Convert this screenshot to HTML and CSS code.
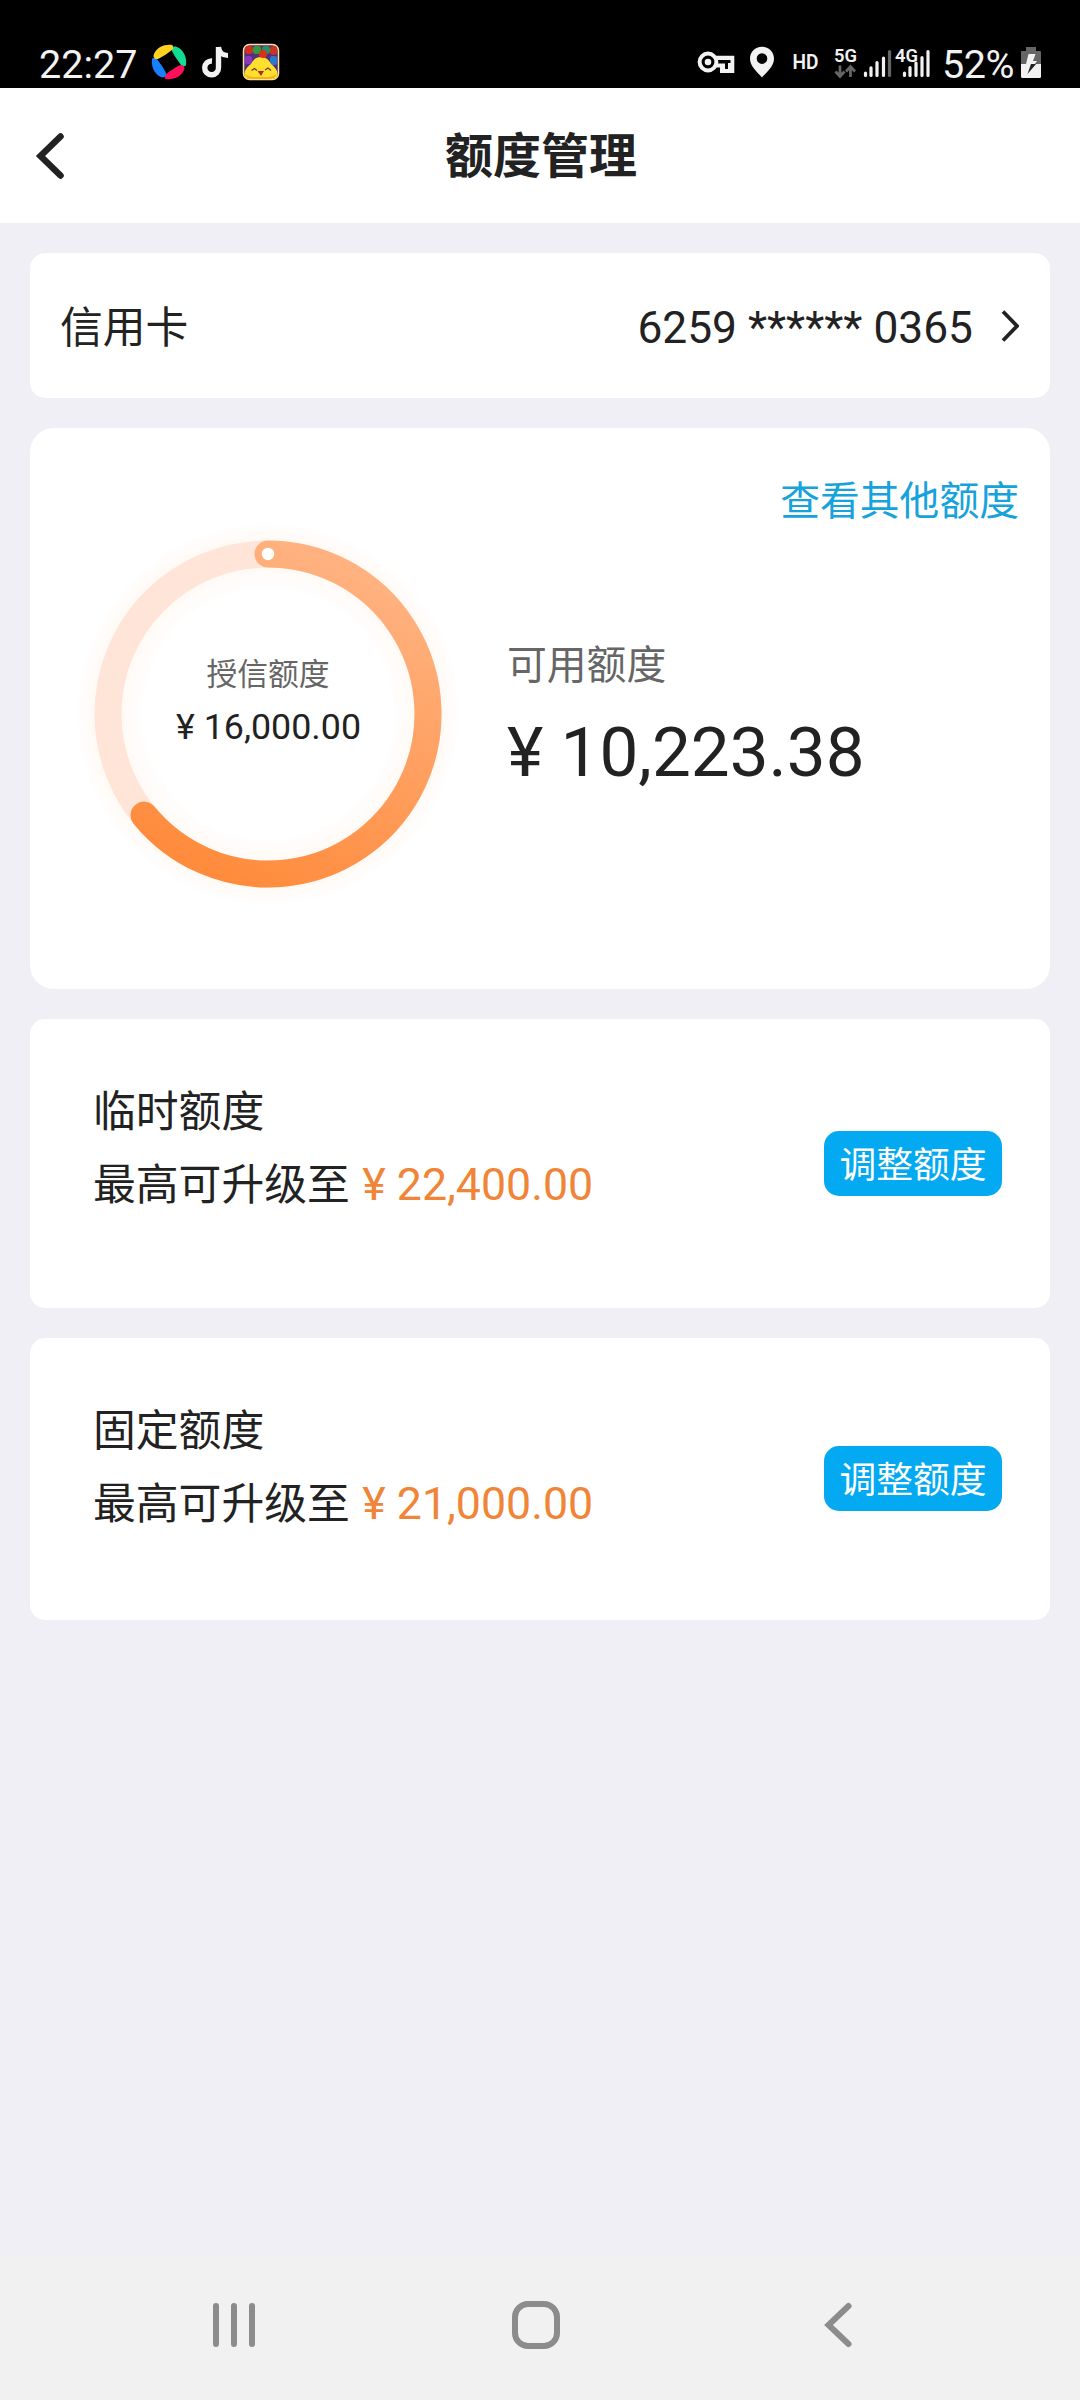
FILE: index.html
```html
<!DOCTYPE html>
<html lang="zh-CN">
<head>
<meta charset="utf-8">
<title>额度管理</title>
<link rel="stylesheet" href="styles.css">
</head>
<body>
<div class="status-bar">
  <span class="clock">22:27</span>
  <svg class="status-apps" width="132" height="48" viewBox="150 38 132 48">
    <defs>
      <path id="petal" d="M3.500 -10C1.500 -14 5 -16.500 8 -15C15 -12 18 -4 17 3C16 5 13.500 4.500 12 3C8.500 -2 6 -5 3.500 -10Z"/>
    </defs>
    <g transform="translate(169 62)">
      <use href="#petal" fill="#12dc94"/>
      <use href="#petal" fill="#ff0f5b" transform="rotate(90)"/>
      <use href="#petal" fill="#1780ff" transform="rotate(180)"/>
      <use href="#petal" fill="#ffd21f" transform="rotate(270)"/>
    </g>
    <path fill="none" stroke="#f2f2f2" stroke-width="5.4" d="M218.500 47V67.500A6.900 6.900 0 1 1 212 61"/>
    <path fill="none" stroke="#f2f2f2" stroke-width="5" d="M218.500 47C219 52 222 55.500 228 55.500"/>
    <rect x="243.500" y="44.500" width="35" height="35" rx="6" fill="#54307a" stroke="#ffe0a0" stroke-width="1.500"/>
    <rect x="245" y="46" width="8" height="8" rx="3" fill="#d12f22"/>
    <rect x="253" y="46" width="8" height="8" rx="3" fill="#2f9c43"/>
    <rect x="262" y="46" width="8" height="8" rx="3" fill="#258f66"/>
    <rect x="270" y="46" width="7" height="9" rx="3" fill="#c93520"/>
    <rect x="245" y="56" width="7" height="8" rx="2" fill="#8b35c2"/>
    <rect x="270" y="56" width="7" height="9" rx="2" fill="#2c78c9"/>
    <path fill="#ffe02e" d="M261 57C266 57 269 60 271 64C275 67 278 71 277.500 75Q277 79 272 79H250Q245 79 244.500 75C244 71 247 67 251 64C253 60 256 57 261 57Z"/>
    <path fill="#f9b414" d="M245 74Q247 79 252 79H270Q275 79 277 74Q273 77 268 77H253Q249 77 245 74Z"/>
    <circle cx="263" cy="54" r="4" fill="#d83218"/>
    <path fill="none" stroke="#7a3b08" stroke-width="1.300" d="M251.500 70.500L254.500 68.500L257 70.500M265 70L268 68L271 70.500"/>
    <path fill="#b02c18" d="M257.500 71H264L261 76Z"/>
  </svg>
  <svg class="status-signals" width="244" height="48" viewBox="691 38 244 48">
    <path fill="#f2f2f2" d="M714 55.700H734.300V73H720V67.500H714Z"/>
    <path fill="#000" d="M714 60H730.500V63H728V69H725V63.500H714Z"/>
    <circle cx="708" cy="62" r="8.400" fill="#000" stroke="#f2f2f2" stroke-width="4"/>
    <circle cx="708" cy="62" r="3.300" fill="#f2f2f2"/>
    <path fill="#f2f2f2" fill-rule="evenodd" d="M762 46.800C755 46.800 750 52 750 58.800C750 66 757 72 762 77.500C767 72 774 66 774 58.800C774 52 769 46.800 762 46.800ZM762 53.300A5.300 5.300 0 1 1 762 63.900A5.300 5.300 0 1 1 762 53.300Z"/>
    <g class="status-caption">
      <text x="792.500" y="69" font-size="21" textLength="26" lengthAdjust="spacingAndGlyphs">HD</text>
      <text x="834" y="61.500" font-size="19" textLength="23" lengthAdjust="spacingAndGlyphs">5G</text>
    </g>
    <path fill="none" stroke="#666" stroke-width="2.800" d="M840 65.500V76M835.500 71.500L840 76.500L844.500 71.500M850.500 77V67M846 71.500L850.500 66.500L855 71.500"/>
    <g fill="none" stroke="#f2f2f2" stroke-width="3.200" stroke-linecap="round">
      <path d="M865.500 73V75.500M871 67.800V75.500M877 62.500V75.500M883.500 58V75.500"/>
      <path stroke="#666" d="M889.500 51.500V75.500"/>
      <path d="M904.500 73V75.500M910 67.500V75.500M916 63V75.500M922 57.500V75.500M928 51.500V75.500"/>
    </g>
    <g class="status-caption">
      <text x="895" y="61.500" font-size="19" textLength="23" lengthAdjust="spacingAndGlyphs">4G</text>
    </g>
  </svg>
  <span class="battery-level">52%</span>
  <svg class="battery" width="20" height="32" viewBox="0 0 20 32">
    <path fill="#666" d="M5 1H15V5H19Q20 5 20 6V19H0V6Q0 5 1 5H5Z"/>
    <path fill="#f2f2f2" d="M0 18H20V30.500Q20 32 18.500 32H1.500Q0 32 0 30.500Z"/>
    <path fill="#222" d="M5 18H10L6.500 28L15.500 17.500H11"/>
    <path fill="#f2f2f2" d="M7.500 8H14.500L12 15H16L14 18H5Z"/>
  </svg>
</div>

<header class="app-header">
  <svg class="back" width="30" height="46" viewBox="0 0 30 46"><path d="M25.500 3.500L5.500 23L25.500 42.500"/></svg>
  <h1 class="title">额度管理</h1>
</header>

<main class="content">
  <section class="card account">
    <span class="cjk">信用卡</span>
    <span class="account-number">6259 ****** 0365</span>
    <svg class="chevron" width="18" height="32" viewBox="0 0 18 32"><path d="M2 1.500L16 16L2 30.500"/></svg>
  </section>

  <section class="card overview">
    <a class="other-limits">查看其他额度</a>
    <div class="overview-body">
      <div class="ring">
        <svg class="ring-chart" width="400" height="400" viewBox="-200 -200 400 400">
          <defs>
            <linearGradient id="usage" gradientUnits="userSpaceOnUse" x1="60" y1="-160" x2="-80" y2="150">
              <stop offset="0" stop-color="#ffb280"/>
              <stop offset="1" stop-color="#ff8b3c"/>
            </linearGradient>
            <radialGradient id="glow" gradientUnits="userSpaceOnUse" cx="0" cy="0" r="192">
              <stop offset=".64" stop-color="#fff"/>
              <stop offset=".78" stop-color="#fff9f4"/>
              <stop offset=".9" stop-color="#fff9f4"/>
              <stop offset="1" stop-color="#fff"/>
            </radialGradient>
          </defs>
          <circle r="192" fill="url(#glow)"/>
          <circle r="160" fill="none" stroke="#ffe5d7" stroke-width="27"/>
          <path d="M0 -160A160 160 0 1 1 -124 101.100" fill="none" stroke="url(#usage)" stroke-width="27" stroke-linecap="round"/>
          <circle cy="-160" r="6.200" fill="#fff"/>
        </svg>
        <div class="ring-text">
          <span class="ring-label">授信额度</span>
          <span class="ring-amount">¥ 16,000.00</span>
        </div>
      </div>
      <div class="available">
        <span class="available-label">可用额度</span>
        <span class="available-amount">¥ 10,223.38</span>
      </div>
    </div>
  </section>

  <section class="card limit temporary">
    <div class="limit-info">
      <span class="cjk">临时额度</span>
      <span class="limit-line"><span class="cjk">最高可升级至</span><span class="limit-amount">¥ 22,400.00</span></span>
    </div>
    <button class="adjust">调整额度</button>
  </section>

  <section class="card limit fixed">
    <div class="limit-info">
      <span class="cjk">固定额度</span>
      <span class="limit-line"><span class="cjk">最高可升级至</span><span class="limit-amount">¥ 21,000.00</span></span>
    </div>
    <button class="adjust">调整额度</button>
  </section>
</main>

<nav class="nav-bar">
  <span class="nav-item"><svg width="48" height="48" viewBox="0 0 48 48"><path d="M6 5V43M24 5V43M42 5V43"/></svg></span>
  <span class="nav-item"><svg width="48" height="48" viewBox="0 0 48 48"><rect x="3" y="3" width="42" height="42" rx="13"/></svg></span>
  <span class="nav-item"><svg width="48" height="48" viewBox="0 0 48 48"><path d="M34.500 5L14.500 24L34.500 43"/></svg></span>
</nav>
</body>
</html>
```
FILE: styles.css
```css
* {
  box-sizing: border-box;
}

body {
  margin: 0;
  height: 2400px;
  display: flex;
  flex-direction: column;
  background: #efeff5;
  color: #222;
  font-family: Roboto, "Noto Sans CJK SC", sans-serif;
}

svg {
  display: block;
  flex: none;
}

.status-bar {
  height: 88px;
  flex: none;
  display: flex;
  align-items: flex-start;
  padding: 38px 39px 0 39px;
  background: #000;
  color: #f2f2f2;
  font-size: 39.5px;
  line-height: 54px;
}

.clock {
  width: 111px;
}

.status-signals {
  margin-left: auto;
}

.status-caption {
  fill: #f2f2f2;
  font-family: Roboto, sans-serif;
  font-weight: 600;
}

.battery-level {
  margin-left: 7px;
  width: 79px;
  white-space: nowrap;
  letter-spacing: -0.4px;
}

.battery {
  margin-top: 8px;
}

.app-header {
  height: 135px;
  flex: none;
  display: grid;
  grid-template-columns: 120px 1fr 120px;
  align-items: center;
  background: #fff;
}

.back {
  margin-left: 35px;
  fill: none;
  stroke: #222;
  stroke-width: 6.5;
  stroke-linecap: round;
}

.title {
  margin: 0;
  padding: 3px 0 0 2px;
  text-align: center;
  font-size: 48px;
  line-height: 60px;
  font-weight: 700;
}

.content {
  flex: 1;
  display: flex;
  flex-direction: column;
  gap: 30px;
  padding: 30px 30px 0;
}

.card {
  background: #fff;
  border-radius: 15px;
}

.cjk {
  font-size: 42.8px;
  line-height: 60px;
}

.account {
  height: 145px;
  display: flex;
  align-items: center;
  padding: 0 31px 0 30px;
}

.account .cjk {
  padding-top: 4px;
}

.account-number {
  margin-left: auto;
  padding-top: 4px;
  font-size: 44.3px;
  line-height: 60px;
}

.chevron {
  margin-left: 28px;
  fill: none;
  stroke: #222;
  stroke-width: 3.8;
}

.overview {
  height: 561px;
  border-radius: 24px;
  display: flex;
  flex-direction: column;
  padding: 46px 31px 0 30px;
}

.other-limits {
  align-self: flex-end;
  color: #16a3dc;
  font-size: 39.8px;
  line-height: 56px;
}

.overview-body {
  display: flex;
  margin-top: -16px;
}

.ring {
  display: grid;
  place-items: center;
  margin-left: 8px;
}

.ring-chart,
.ring-text {
  grid-area: 1 / 1;
}

.ring-text {
  display: flex;
  flex-direction: column;
  align-items: center;
  margin-bottom: 27px;
}

.ring-label {
  color: #666;
  font-size: 30.8px;
  line-height: 52px;
}

.ring-amount {
  padding-left: 1px;
  font-size: 35.8px;
  line-height: 52px;
}

.available {
  display: flex;
  flex-direction: column;
  margin: 122px 0 0 39px;
}

.available-label {
  color: #666;
  font-size: 39.8px;
  line-height: 60px;
}

.available-amount {
  font-size: 69.2px;
  line-height: 84px;
  margin-top: 15px;
}

.limit {
  display: flex;
  align-items: flex-start;
  justify-content: space-between;
  padding: 63px 48px 0 63px;
}

.temporary {
  height: 289px;
}

.fixed {
  height: 282px;
}

.limit-info {
  display: flex;
  flex-direction: column;
  gap: 13px;
}

.limit-line {
  display: flex;
  gap: 12.5px;
}

.limit-amount {
  color: #f08437;
  font-size: 44.7px;
  line-height: 60px;
}

.adjust {
  width: 178px;
  height: 65px;
  margin: 49px 0 0;
  padding: 5px 0 0;
  border: 0;
  border-radius: 15px;
  background: #03a9f1;
  color: #fff;
  font-family: inherit;
  font-size: 36.8px;
  line-height: 60px;
}

.fixed .adjust {
  margin-top: 45px;
}

.nav-bar {
  height: 144px;
  flex: none;
  display: flex;
  justify-content: center;
  align-items: center;
  padding: 0 8px 6px 0;
  background: #f1f1f1;
}

.nav-item {
  width: 302px;
  display: flex;
  justify-content: center;
}

.nav-item svg {
  fill: none;
  stroke: #8c8c8c;
  stroke-width: 6;
  stroke-linecap: round;
}
```
